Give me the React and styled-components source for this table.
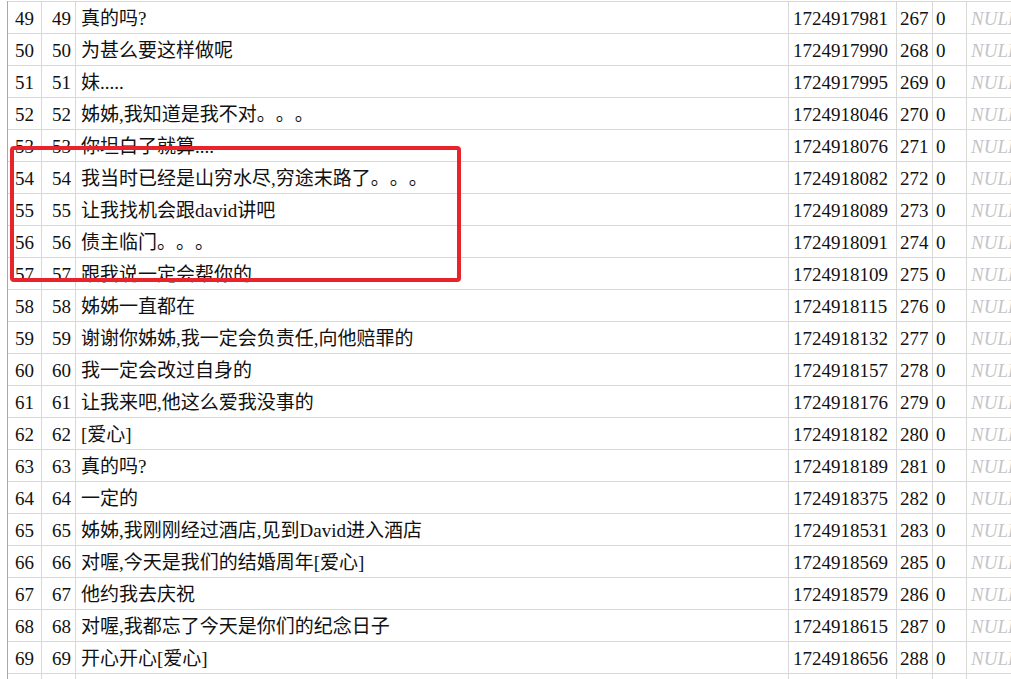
import React from 'react';
import styled, { createGlobalStyle } from 'styled-components';

const GlobalStyle = createGlobalStyle`
  html, body {
    margin: 0;
    padding: 0;
    background: #ffffff;
    overflow: hidden;
  }
`;

const rows = [
  [49, '真的吗?', 1724917981, 267],
  [50, '为甚么要这样做呢', 1724917990, 268],
  [51, '妹.....', 1724917995, 269],
  [52, '姊姊,我知道是我不对。。。', 1724918046, 270],
  [53, '你坦白了就算....', 1724918076, 271],
  [54, '我当时已经是山穷水尽,穷途末路了。。。', 1724918082, 272],
  [55, '让我找机会跟david讲吧', 1724918089, 273],
  [56, '债主临门。。。', 1724918091, 274],
  [57, '跟我说一定会帮你的', 1724918109, 275],
  [58, '姊姊一直都在', 1724918115, 276],
  [59, '谢谢你姊姊,我一定会负责任,向他赔罪的', 1724918132, 277],
  [60, '我一定会改过自身的', 1724918157, 278],
  [61, '让我来吧,他这么爱我没事的', 1724918176, 279],
  [62, '[爱心]', 1724918182, 280],
  [63, '真的吗?', 1724918189, 281],
  [64, '一定的', 1724918375, 282],
  [65, '姊姊,我刚刚经过酒店,见到David进入酒店', 1724918531, 283],
  [66, '对喔,今天是我们的结婚周年[爱心]', 1724918569, 285],
  [67, '他约我去庆祝', 1724918579, 286],
  [68, '对喔,我都忘了今天是你们的纪念日子', 1724918615, 287],
  [69, '开心开心[爱心]', 1724918656, 288],
];

const Page = styled.div`
  position: relative;
  width: 1011px;
  height: 679px;
  overflow: hidden;
  padding-left: 7px;
  padding-top: 1px;
  box-sizing: border-box;
`;

const Grid = styled.div`
  border-left: 1px solid #a8a8a8;
  display: flex;
  flex-direction: column;
`;

const Row = styled.div`
  display: grid;
  grid-template-columns: 34px 34px 713px 108px 36px 34px 80px;
  height: 32px;
  border-top: 1px solid #d8d8d8;
  box-sizing: border-box;
  font-family: "Liberation Serif", "Noto Sans CJK SC", serif;
  font-size: 19px;
  color: #111;
  text-spacing-trim: space-all;
`;

const Cell = styled.div`
  border-right: 1px solid #d8d8d8;
  display: flex;
  align-items: center;
  justify-content: ${p => (p.$right ? 'flex-end' : 'flex-start')};
  padding: 1px ${p => (p.$right ? '4px' : '0')} 0 ${p => p.$pad || 4}px;
  white-space: nowrap;
  overflow: hidden;
  line-height: 1;
  box-sizing: border-box;
`;

const Null = styled(Cell)`
  color: #c4c4c4;
  font-style: italic;
  border-right: none;
`;

const Highlight = styled.div`
  position: absolute;
  left: 10px;
  top: 146px;
  width: 451px;
  height: 136px;
  border: 4px solid #e8232b;
  border-radius: 4px;
  box-sizing: border-box;
  pointer-events: none;
`;

export default function App() {
  return (
    <Page>
      <GlobalStyle />
      <Grid>
        {rows.map(([n, text, ts, id]) => (
          <Row key={n}>
            <Cell $pad={7}>{n}</Cell>
            <Cell $right>{n}</Cell>
            <Cell $pad={5}>{text}</Cell>
            <Cell $pad={4}>{ts}</Cell>
            <Cell $pad={3}>{id}</Cell>
            <Cell $pad={3}>0</Cell>
            <Null $pad={4}>NULL</Null>
          </Row>
        ))}
        <Row>
          <Cell />
          <Cell />
          <Cell />
          <Cell />
          <Cell />
          <Cell />
          <Null />
        </Row>
      </Grid>
      <Highlight />
    </Page>
  );
}
